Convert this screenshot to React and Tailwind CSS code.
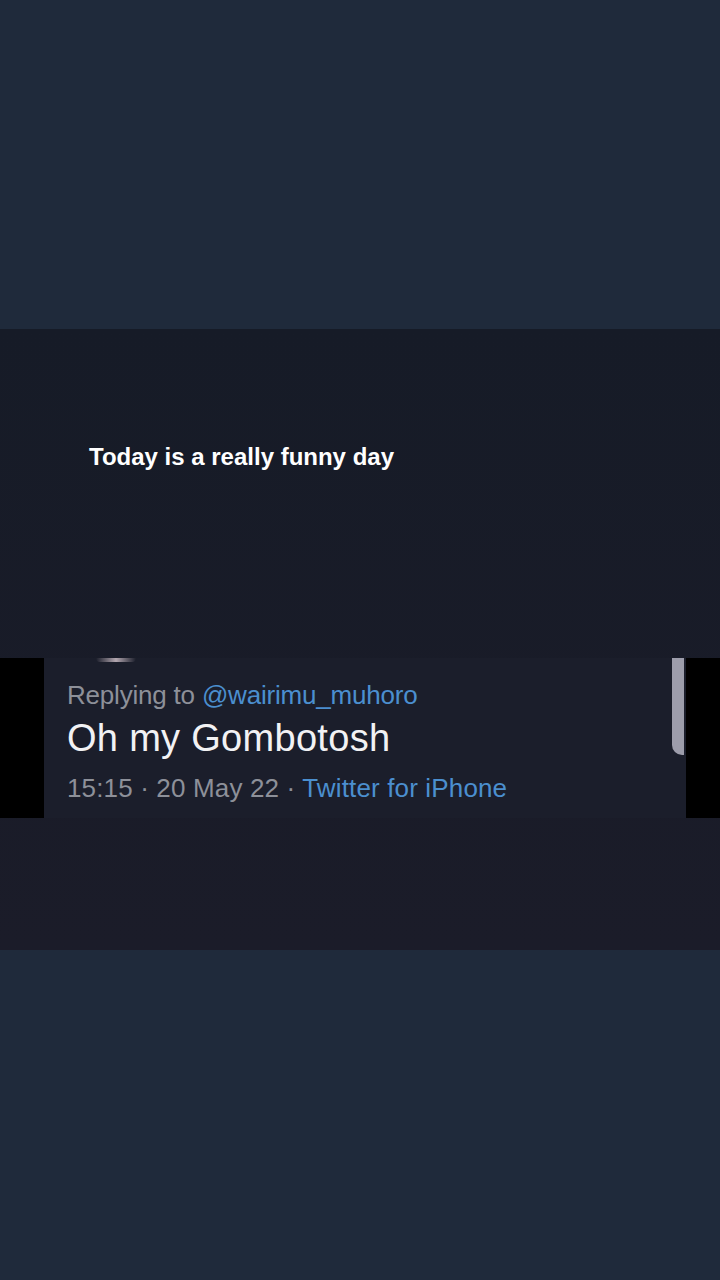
export default function App() {
  return (
    <div className="w-[720px] h-[1280px] flex flex-col bg-[#1f2a3b]" style={{ fontFamily: '"Liberation Sans", Arial, sans-serif' }}>
      <div className="h-[329px] bg-[#1f2a3b]" />
      <div className="h-[621px] flex flex-col bg-gradient-to-b from-[#161b27] to-[#1b1c29]">
        <div className="pt-[113px] pl-[89px] text-white text-[24px] font-bold leading-[30px] tracking-[0px]">
          Today is a really funny day
        </div>
        <div className="mt-[186px] h-[160px] flex">
          <div className="w-[44px] bg-black" />
          <div className="relative flex-1 bg-[#1b1e2b] flex flex-col pl-[23px]">
            <div className="absolute left-[52px] top-0 w-[40px] h-[4px] rounded-b-full bg-gradient-to-r from-transparent via-[#d8c8d0] to-transparent opacity-80" />
            <div className="absolute right-[2px] top-0 w-[12px] h-[97px] bg-[#9d9dab] rounded-bl-[10px]" />
            <div className="mt-[22px] text-[26px] leading-[30px] tracking-[-0.2px] text-[#8d9099]">
              Replying to <span className="text-[#4b8fcf]">@wairimu_muhoro</span>
            </div>
            <div className="mt-[7px] text-[38px] leading-[42px] tracking-[0.3px] text-[#f2f2f4]">
              Oh my Gombotosh
            </div>
            <div className="mt-[14px] text-[26px] leading-[30px] tracking-[0.15px] text-[#8d9099]">
              15:15 · 20 May 22 · <span className="text-[#4b8fcf]">Twitter for iPhone</span>
            </div>
          </div>
          <div className="w-[34px] bg-black" />
        </div>
      </div>
      <div className="h-[330px] bg-[#1f2a3b]" />
    </div>
  );
}
